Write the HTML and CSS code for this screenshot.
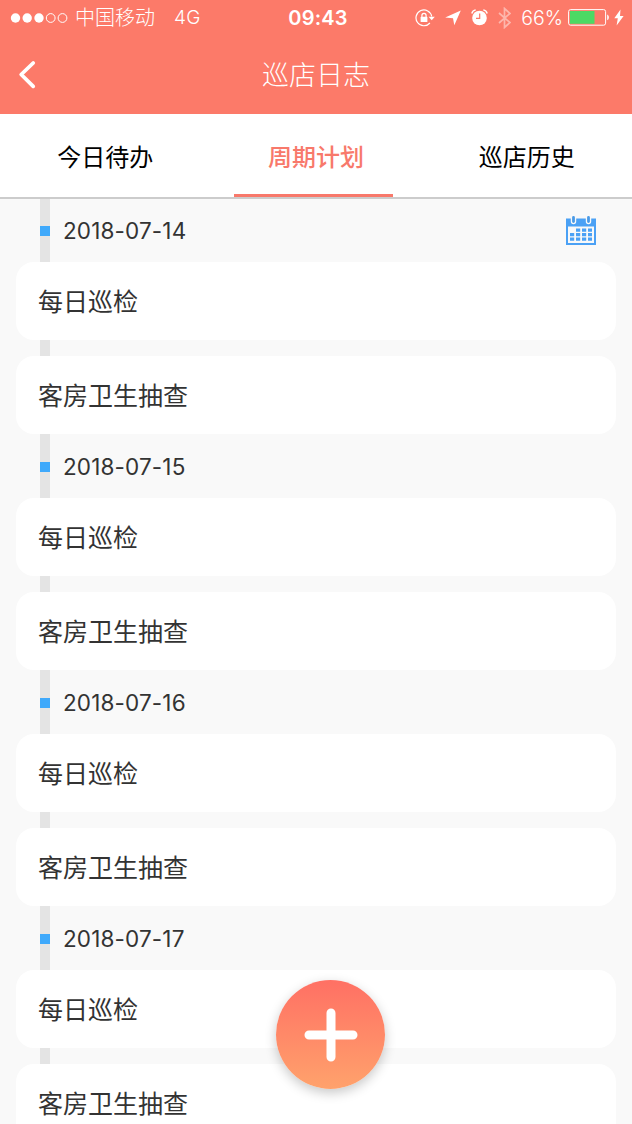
FILE: index.html
```html
<!DOCTYPE html>
<html lang="zh-CN">
<head>
    <meta charset="UTF-8">
    <meta name="viewport" content="width=device-width, initial-scale=1.0">
    <title>巡店日志</title>
    <link rel="stylesheet" href="styles.css">
</head>
<body>
    <header class="header">
        <div class="status">
            <div class="status-left">
                <svg class="signal" width="58" height="12" viewBox="0 0 58 12">
                    <g fill="#fff">
                        <circle cx="5.5" cy="6" r="4.7"/>
                        <circle cx="17.2" cy="6" r="4.7"/>
                        <circle cx="29" cy="6" r="4.7"/>
                    </g>
                    <g fill="none" stroke="#fff" stroke-width="1">
                        <circle cx="40.7" cy="6" r="4.4"/>
                        <circle cx="52.5" cy="6" r="4.4"/>
                    </g>
                </svg>
                <span class="carrier">中国移动</span>
                <span class="network">4G</span>
            </div>
            <span class="time">09:43</span>
            <div class="status-right">
                <svg class="lock" width="20" height="18" viewBox="0 0 20 18">
                    <path d="M16.7 7.5A7.9 7.9 0 1 0 14.9 14" fill="none" stroke="#fff" stroke-width="1.2"/>
                    <path d="M13.6 7.7h6.2l-3.1 3.6z" fill="#fff"/>
                    <path d="M6.9 8.5V6.4a2.1 2.1 0 0 1 4.2 0v2.1" fill="none" stroke="#fff" stroke-width="1.2"/>
                    <rect x="5.6" y="7.8" width="6.8" height="5.2" rx=".6" fill="#fff"/>
                </svg>
                <svg class="location" width="16" height="16" viewBox="0 0 16 16">
                    <path d="M15.8.5 9.3 15.3 8 8.3.2 7.5z" fill="#fff"/>
                </svg>
                <svg class="alarm" width="17" height="17" viewBox="0 0 17 17">
                    <circle cx="8.5" cy="9" r="7.3" fill="#fff"/>
                    <path d="M.8 4.5A5 5 0 0 1 4.7.9M16.2 4.5A5 5 0 0 0 12.3.9" fill="none" stroke="#fff" stroke-width="1.4"/>
                    <path d="M8.7 4.5v4.8H5" fill="none" stroke="#fc7a69" stroke-width="1.2"/>
                </svg>
                <svg class="bluetooth" width="13" height="22" viewBox="0 0 13 22">
                    <path d="M1 6 12 15.5 6.5 20.5V1.5L12 6.5 1 16" fill="none" stroke="#fff" stroke-width="1.7"/>
                </svg>
                <span class="percent">66%</span>
                <svg class="battery" width="42" height="17" viewBox="0 0 42 17">
                    <rect x=".6" y=".6" width="37" height="15.6" rx="2" fill="none" stroke="#fff" stroke-width="1"/>
                    <rect x="2" y="2" width="24.5" height="12.8" fill="#4cd964"/>
                    <path d="M39.2 5.5c2.2.8 2.2 5 0 5.8z" fill="#fff"/>
                </svg>
                <svg class="bolt" width="10" height="17" viewBox="0 0 10 17">
                    <path d="M6.5.5.3 9.2h3.5L2.6 16.5 9.6 7H6z" fill="#fff"/>
                </svg>
            </div>
        </div>
        <div class="navbar">
            <svg class="back" width="20" height="30" viewBox="0 0 20 30">
                <path d="M15.2 3 3.2 14.5l12 11.8" fill="none" stroke="#fff" stroke-width="3.8" stroke-linecap="round" stroke-linejoin="round"/>
            </svg>
            <h1 class="title">巡店日志</h1>
        </div>
    </header>

    <nav class="tabs">
        <div class="tab"><span>今日待办</span></div>
        <div class="tab active"><span>周期计划</span></div>
        <div class="tab"><span>巡店历史</span></div>
    </nav>

    <main class="timeline">
        <section class="day">
            <div class="day-head">
                <i class="dot"></i>
                <span class="date">2018-07-14</span>
                <svg class="calendar" width="30" height="30" viewBox="0 0 30 30">
                    <path d="M0 2.5h30V29H0zM2 10.5v16.5h26V10.5z" fill="#4ba1f5" fill-rule="evenodd"/>
                    <path d="M7.5 1.5v4M22.5 1.5v4" stroke="#f9f9f9" stroke-width="5.4" stroke-linecap="round"/>
                    <path d="M7.5 1.5v4M22.5 1.5v4" stroke="#4a9ae6" stroke-width="2.8" stroke-linecap="round"/>
                    <path d="M10 14.2h16M4 18.7h22M4 23.2h22" stroke="#4ba1f5" stroke-width="3.2" stroke-dasharray="4.2 1.8"/>
                </svg>
            </div>
            <div class="card">每日巡检</div>
            <div class="card">客房卫生抽查</div>
        </section>
        <section class="day">
            <div class="day-head">
                <i class="dot"></i>
                <span class="date">2018-07-15</span>
            </div>
            <div class="card">每日巡检</div>
            <div class="card">客房卫生抽查</div>
        </section>
        <section class="day">
            <div class="day-head">
                <i class="dot"></i>
                <span class="date">2018-07-16</span>
            </div>
            <div class="card">每日巡检</div>
            <div class="card">客房卫生抽查</div>
        </section>
        <section class="day">
            <div class="day-head">
                <i class="dot"></i>
                <span class="date">2018-07-17</span>
            </div>
            <div class="card">每日巡检</div>
            <div class="card">客房卫生抽查</div>
        </section>
    </main>

    <button class="add" aria-label="新增">
        <svg width="54" height="54" viewBox="0 0 54 54">
            <path d="M27 5v44M5 27h44" stroke="#fff" stroke-width="9" stroke-linecap="round"/>
        </svg>
    </button>
</body>
</html>
```
FILE: styles.css
```css
* {
    box-sizing: border-box;
}
body {
    margin: 0;
    height: 1124px;
    display: flex;
    flex-direction: column;
    overflow: hidden;
    position: relative;
    background-color: #f9f9f9;
    color: #333;
    font-family: Inter, "Noto Sans CJK SC", sans-serif;
}
svg {
    display: block;
    flex-shrink: 0;
}
.header {
    flex: none;
    height: 114px;
    background-color: #fc7a69;
    color: #fff;
}
.status {
    height: 35px;
    padding: 0 8px 0 10px;
    display: grid;
    grid-template-columns: 1fr auto 1fr;
    align-items: center;
    font-size: 19px;
    line-height: 34px;
}
.status-left, .status-right {
    display: flex;
    align-items: center;
}
.status-right {
    justify-content: flex-end;
}
.carrier {
    margin-left: 7px;
    padding-top: 1px;
    font-size: 20px;
    font-weight: 300;
}
.network {
    margin-left: 19px;
    font-weight: 300;
    letter-spacing: 0.3px;
}
.time {
    margin-left: 2px;
    font-weight: 600;
    font-size: 20px;
    letter-spacing: 0.2px;
}
.location {
    margin-left: 10px;
}
.alarm {
    margin-left: 10px;
}
.bluetooth {
    margin-left: 10px;
    opacity: 0.45;
}
.percent {
    margin-left: 10px;
    font-weight: 300;
    font-size: 19.5px;
}
.battery {
    margin-left: 5px;
}
.bolt {
    margin-left: 4px;
}
.navbar {
    height: 79px;
    padding: 0 18px;
    display: grid;
    grid-template-columns: 20px 1fr 20px;
    align-items: center;
}
.title {
    margin: 0;
    padding-top: 3px;
    text-align: center;
    font-size: 27px;
    font-weight: 300;
    line-height: 40px;
}
.tabs {
    flex: none;
    height: 85px;
    display: flex;
    background-color: #fff;
    border-bottom: 2px solid #ccc;
}
.tab {
    flex: 1;
    display: flex;
    justify-content: center;
    color: #000;
    font-size: 24px;
    line-height: 88px;
}
.tab span {
    width: 159px;
    height: 83px;
    text-align: center;
}
.active {
    color: #f8796b;
    font-weight: 500;
}
.active span {
    background: linear-gradient(#f8796b, #f8796b) left bottom / 100% 3px no-repeat;
    margin-right: 5px;
    text-indent: 5px;
}
.timeline {
    flex: none;
    margin-top: -1px;
    padding: 0 16px;
    background: linear-gradient(#e4e4e4, #e4e4e4) 40px 1px / 10px 100% no-repeat;
}
.day-head {
    height: 64px;
    padding: 1px 20px 0 24px;
    display: flex;
    align-items: center;
}
.dot {
    width: 10px;
    height: 10px;
    background-color: #3fa9fb;
}
.date {
    flex: 1;
    margin-left: 13px;
    font-size: 22.5px;
    font-weight: 400;
    letter-spacing: 0.15px;
}
.card {
    height: 78px;
    padding-left: 22px;
    border-radius: 18px;
    background-color: #fff;
    font-size: 25px;
    line-height: 80px;
}
.card + .card {
    margin-top: 16px;
}
.add {
    position: absolute;
    left: 276px;
    top: 980px;
    width: 109px;
    height: 109px;
    padding: 0;
    border: none;
    border-radius: 50%;
    background: linear-gradient(#ff7064, #ffa26c);
    box-shadow: 0 4px 12px rgba(0, 0, 0, 0.22);
    display: flex;
    align-items: center;
    justify-content: center;
}
```
